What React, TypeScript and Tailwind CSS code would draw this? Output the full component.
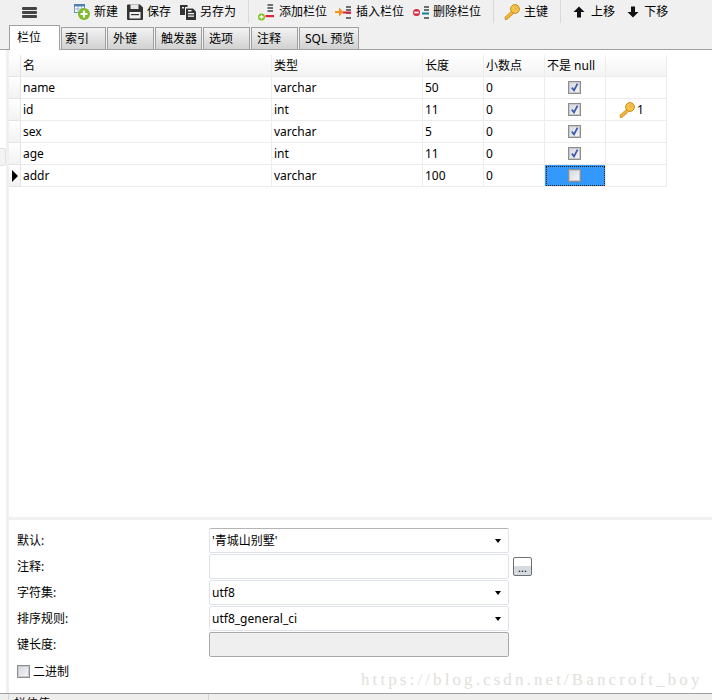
import React from "react";

const cjk = "font-['Noto_Sans','Noto_Sans_CJK_SC',sans-serif]";

function NewIcon() {
  return (
    <svg width="16" height="16" viewBox="0 0 16 16" className="shrink-0">
      <rect x="0.5" y="0.5" width="10" height="8" fill="#fff" stroke="#6a8fb8" />
      <rect x="0" y="0" width="11" height="2.5" fill="#4f7fb5" />
      <path d="M0 5h11M4 2v7M7.5 2v7" stroke="#9db4cf" strokeWidth="1" />
      <circle cx="10" cy="10" r="6" fill="#7fbc2b" />
      <path d="M10 6.5v7M6.5 10h7" stroke="#fff" strokeWidth="2.2" />
    </svg>
  );
}
function SaveIcon() {
  return (
    <svg width="16" height="16" viewBox="0 0 16 16" className="shrink-0">
      <path d="M0 1.5A1 1 0 0 1 1 .5h12l3 3V15a1 1 0 0 1-1 1H1a1 1 0 0 1-1-1z" fill="#333" />
      <rect x="3.5" y="0.5" width="8" height="4.5" fill="#e8e8e8" />
      <rect x="2.5" y="8" width="11" height="6.5" fill="#f2f2f2" />
      <rect x="4" y="10" width="8" height="1.2" fill="#333" />
    </svg>
  );
}
function SaveAsIcon() {
  return (
    <svg width="16" height="16" viewBox="0 0 16 16" className="shrink-0">
      <path d="M0 1h7.5v2H5v8H0z" fill="#333" />
      <rect x="2" y="3" width="2" height="1.5" fill="#eee" />
      <path d="M6 4.5h7l3 3V16H6z" fill="#333" />
      <rect x="8" y="9" width="6" height="1.3" fill="#f2f2f2" />
      <rect x="8" y="11.5" width="6" height="1.3" fill="#f2f2f2" />
      <rect x="8" y="6" width="3.5" height="1.5" fill="#f2f2f2" />
    </svg>
  );
}
function Bars({ y2 }: { y2?: boolean }) {
  return (
    <g fill="#6e6e6e">
      <rect x="11" y="2" width="5" height="2" />
      <rect x="11" y="5" width="5" height="2" />
      {y2 ? <rect x="11" y="13" width="5" height="2" /> : <rect x="11" y="8" width="5" height="2" />}
    </g>
  );
}
function AddColIcon() {
  return (
    <svg width="16" height="18" viewBox="0 0 16 18" className="shrink-0">
      <g fill="#6e6e6e">
        <rect x="9.5" y="1" width="5.5" height="2" />
        <rect x="9.5" y="4" width="5.5" height="2" />
        <rect x="9.5" y="7" width="5.5" height="2" />
      </g>
      <rect x="7.5" y="12" width="8.5" height="2.2" fill="#e0213f" />
      <circle cx="3.5" cy="14" r="3.5" fill="#7fc31c" />
      <path d="M3.5 12v4M1.5 14h4" stroke="#fff" strokeWidth="1.3" />
    </svg>
  );
}
function InsertColIcon() {
  return (
    <svg width="16" height="16" viewBox="0 0 16 16" className="shrink-0">
      <Bars />
      <g fill="#6e6e6e">
        <rect x="11" y="13" width="5" height="2" />
      </g>
      <rect x="8" y="9.5" width="8" height="2" fill="#e0213f" transform="translate(0 -2)" />
      <path d="M0 7h4V3.5L8.5 8 4 12.5V9H0z" fill="#f7921e" />
    </svg>
  );
}
function DeleteColIcon() {
  return (
    <svg width="16" height="16" viewBox="0 0 16 16" className="shrink-0">
      <Bars y2 />
      <rect x="9" y="8.5" width="7" height="2" fill="#0f7f9e" />
      <circle cx="3.5" cy="8.5" r="3.5" fill="#d8253c" />
      <rect x="1.2" y="7.6" width="4.6" height="1.8" fill="#fff" />
    </svg>
  );
}
function KeyIcon() {
  return (
    <svg width="16" height="16" viewBox="0 0 16 16" className="shrink-0">
      <path d="M8.8 6.2 1 13.2l.2 2.3h2l.5-1.5 1.5-.2.3-1.5 1.5-.2 3.6-4.2z" fill="#f3b63a" stroke="#c98a17" strokeWidth="0.8" />
      <circle cx="11" cy="5" r="4.4" fill="#f7c445" stroke="#c98a17" strokeWidth="1" />
      <circle cx="12" cy="3.8" r="1.1" fill="#fff3c4" stroke="#c98a17" strokeWidth="0.6" />
    </svg>
  );
}
function UpIcon() {
  return (
    <svg width="12" height="12" viewBox="0 0 12 12" className="shrink-0">
      <path d="M6 0.5 11.5 6H8v5.5H4V6H0.5z" fill="#111" />
    </svg>
  );
}
function DownIcon() {
  return (
    <svg width="12" height="12" viewBox="0 0 12 12" className="shrink-0">
      <path d="M6 11.5 11.5 6H8V0.5H4V6H0.5z" fill="#111" />
    </svg>
  );
}

function Sep({ className }: { className: string }) {
  return <div className={`w-px h-[23px] self-start bg-[#d9d9d9] ${className}`} />;
}

function Check({ on }: { on?: boolean }) {
  return (
    <div className="relative w-[13px] h-[13px] border border-[#8e8e8e] bg-gradient-to-br from-[#d3d8e2] to-[#f7f7f7] outline outline-[#c8c8c8] -outline-offset-2">
      {on && (
        <svg width="11" height="11" viewBox="0 0 11 11" className="absolute inset-0">
          <path d="M2.8 5.6 5 8.4 8.6 1.6" fill="none" stroke="#3f5ba9" strokeWidth="1.8" />
        </svg>
      )}
    </div>
  );
}

const COLS = "grid grid-cols-[12px_251px_151px_61px_61px_61px_61px] w-[658px]";
const CELL = "flex items-center pl-[2px] border-r border-b border-[#ececec] h-[22px]";

const rows = [
  { name: "name", type: "varchar", len: "50", on: true },
  { name: "id", type: "int", len: "11", on: true, key: true },
  { name: "sex", type: "varchar", len: "5", on: true },
  { name: "age", type: "int", len: "11", on: true },
  { name: "addr", type: "varchar", len: "100", on: false, sel: true },
];

const tabs = [
  { t: "索引", c: "w-[45px] pl-[3px]" },
  { t: "外键", c: "w-[47px] pl-[5px]" },
  { t: "触发器", c: "w-[47px] pl-[5px]" },
  { t: "选项", c: "w-[47px] pl-[5px]" },
  { t: "注释", c: "w-[47px] pl-[5px]" },
  { t: "SQL 预览", c: "w-[60px] pl-[5px]" },
];

function Arrow() {
  return <div className="ml-auto mr-[5px] w-0 h-0 border-x-[3.5px] border-x-transparent border-t-[4px] border-t-black" />;
}

function FormRow({ label, children }: { label: string; children: React.ReactNode }) {
  return (
    <div className="flex items-center h-[25px]">
      <div className="w-[192px]">{label}</div>
      {children}
    </div>
  );
}

const fieldBase = "w-[300px] h-[25px] flex items-center px-[2px] rounded-[2px] border bg-white";

export default function App() {
  return (
    <div className={`relative w-[712px] h-[700px] overflow-hidden bg-white text-[12px] leading-[16px] text-black flex flex-col ${cjk}`}>
      <div className="bg-[#f0f0f0] shrink-0">
        <div className="h-[25px] flex items-center pb-[1px]">
          <div className="ml-[22px] w-[15px] h-[11px] flex flex-col justify-between">
            <div className="h-[3px] bg-[#444] rounded-[1px]" />
            <div className="h-[3px] bg-[#444] rounded-[1px]" />
            <div className="h-[3px] bg-[#444] rounded-[1px]" />
          </div>
          <div className="ml-[37px] flex items-center gap-[4px]"><NewIcon /><span>新建</span></div>
          <div className="ml-[9px] flex items-center gap-[4px]"><SaveIcon /><span>保存</span></div>
          <div className="ml-[9px] flex items-center gap-[4px]"><SaveAsIcon /><span>另存为</span></div>
          <Sep className="ml-[12px]" />
          <div className="ml-[9px] flex items-center gap-[5px]"><AddColIcon /><span>添加栏位</span></div>
          <div className="ml-[8px] flex items-center gap-[5px]"><InsertColIcon /><span>插入栏位</span></div>
          <div className="ml-[9px] flex items-center gap-[4px]"><DeleteColIcon /><span>删除栏位</span></div>
          <Sep className="ml-[12px]" />
          <div className="ml-[10px] flex items-center gap-[4px]"><KeyIcon /><span>主键</span></div>
          <Sep className="ml-[12px]" />
          <div className="ml-[12px] flex items-center gap-[6px]"><UpIcon /><span>上移</span></div>
          <div className="ml-[12px] flex items-center gap-[5px]"><DownIcon /><span>下移</span></div>
        </div>
        <div className="h-[25px] pl-[9px] flex items-end gap-px border-b border-[#a0a0a0]">
          <div className="w-[51px] h-[25px] -mb-px bg-white border border-b-0 border-[#a0a0a0] pl-[7px] pt-[4px]">栏位</div>
          {tabs.map((t) => (
            <div key={t.t} className={`${t.c} h-[22px] border-x border-t border-[#a0a0a0] bg-gradient-to-b from-[#f2f2f2] to-[#d2d2d2] pt-[3px] whitespace-nowrap`}>
              {t.t}
            </div>
          ))}
        </div>
      </div>

      <div className="flex-1 flex min-h-0">
        <div className="w-[6px] shrink-0 bg-white" />
        <div className="w-[3px] shrink-0 bg-[#f0f0f0]" />
        <div className="flex-1 flex flex-col min-w-0">
          <div className="flex-1 pt-[5px]">
            <div className={COLS}>
              <div className="border-r border-b border-[#e4e4e4] h-[22px] bg-gradient-to-b from-white to-[#f3f3f3]" />
              {["名", "类型", "长度", "小数点", "不是 null", ""].map((h, i) => (
                <div key={i} className={`${CELL} bg-gradient-to-b from-white to-[#f3f3f3] border-[#e4e4e4]`}>{h}</div>
              ))}
            </div>
            {rows.map((r) => (
              <div key={r.name} className={COLS}>
                <div className="h-[22px] border-r border-b border-[#e4e4e4] bg-gradient-to-b from-white to-[#f2f2f2] flex items-center pl-[3px]">
                  {r.sel && <div className="w-0 h-0 border-y-[6px] border-y-transparent border-l-[6px] border-l-black" />}
                </div>
                <div className={CELL}>{r.name}</div>
                <div className={CELL}>{r.type}</div>
                <div className={CELL}>{r.len}</div>
                <div className={CELL}>0</div>
                <div className={`${CELL} !pl-0 pr-[1px] justify-center ${r.sel ? "bg-[#3399ff] outline-[1px] outline-dotted outline-[#2a1c08] -outline-offset-2" : ""}`}>
                  <Check on={r.on} />
                </div>
                <div className={`${CELL} !pl-[13px]`}>
                  {r.key && (
                    <div className="flex items-center gap-[2px]"><KeyIcon /><span>1</span></div>
                  )}
                </div>
              </div>
            ))}
          </div>
          <div className="h-[3px] bg-[#f0f0f0] shrink-0" />
          <div className="h-[173px] shrink-0 pl-[8px] pt-[8px] flex flex-col gap-px">
            <FormRow label="默认:">
              <div className={`${fieldBase} border-[#dfe2e8] border-t-[#b4b4b4]`}>
                <span>'青城山别墅'</span><Arrow />
              </div>
            </FormRow>
            <FormRow label="注释:">
              <div className={`${fieldBase} border-[#dfe2e8]`} />
              <div className="ml-[4px] w-[19px] h-[19px] rounded-[2px] border border-[#707070] bg-gradient-to-b from-white from-50% to-[#d6dbe2] to-50% flex items-end justify-center leading-[14px] text-[11px]">...</div>
            </FormRow>
            <FormRow label="字符集:">
              <div className={`${fieldBase} border-[#dfe2e8]`}>
                <span>utf8</span><Arrow />
              </div>
            </FormRow>
            <FormRow label="排序规则:">
              <div className={`${fieldBase} border-[#dfe2e8]`}>
                <span>utf8_general_ci</span><Arrow />
              </div>
            </FormRow>
            <FormRow label="键长度:">
              <div className={`${fieldBase} !bg-[#efefef] border-[#a8a8a8]`} />
            </FormRow>
            <div className="flex items-center gap-[3px] mt-[7px] h-[13px]">
              <Check />
              <span>二进制</span>
            </div>
          </div>
        </div>
      </div>

      <div className="h-[7px] shrink-0 overflow-hidden border-t border-[#a0a0a0] bg-[#f0eded] flex">
        <div className="w-[9px] border-r border-[#d4d4d4]" />
        <div className="w-[200px] border-r border-[#d4d4d4] pl-[5px] pt-[3px] leading-[14px]">栏位值</div>
      </div>

      <div className="absolute left-[361px] top-[670px] text-[17px] tracking-[3.1px] leading-[20px] text-[#e2e0da] font-['Liberation_Serif',serif] whitespace-nowrap">
        https://blog.csdn.net/Bancroft_boy
      </div>
      <div className="absolute left-0 top-[148px] w-[6px] h-[18px] bg-[#f2f2f2] border border-l-0 border-[#e2e2e2] rounded-r-[2px]" />
    </div>
  );
}
